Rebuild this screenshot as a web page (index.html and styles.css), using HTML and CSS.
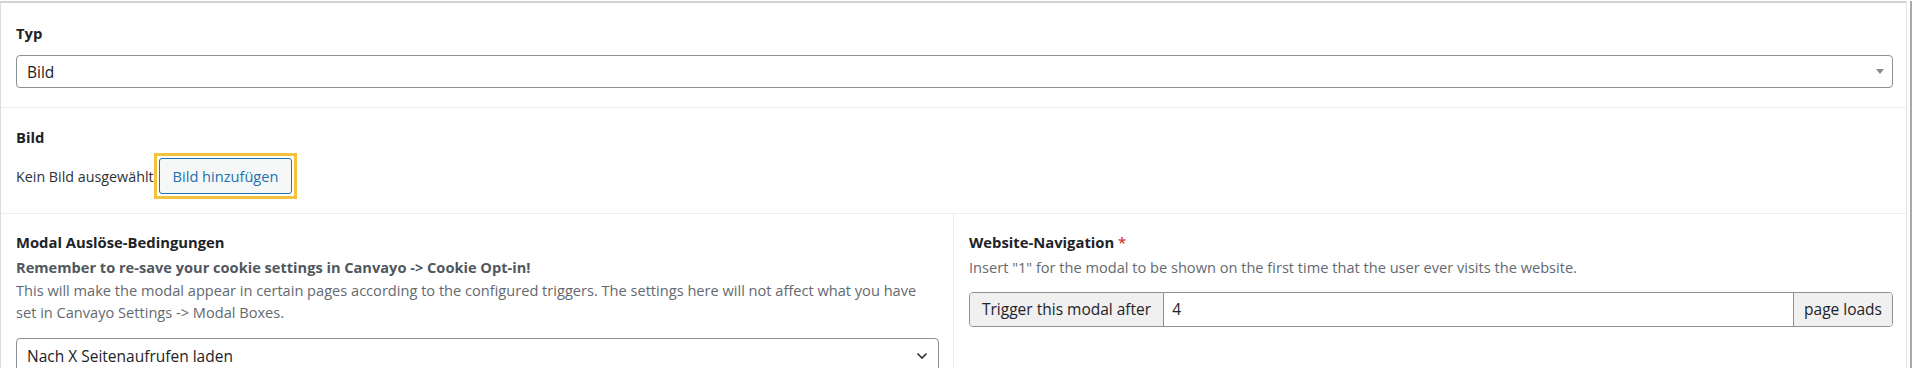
FILE: index.html
```html
<!DOCTYPE html>
<html lang="de">
<head>
    <meta charset="UTF-8">
    <title>Modal Felder</title>
    <link rel="stylesheet" href="styles.css">
</head>
<body>
    <div class="wrap">
        <div class="panel">
            <!-- Typ -->
            <div class="field field-type">
                <div class="field-label">Typ</div>
                <div class="select2-box">
                    <span>Bild</span>
                    <span class="select2-arrow"></span>
                </div>
            </div>

            <!-- Bild -->
            <div class="field field-image">
                <div class="field-label">Bild</div>
                <div class="image-row">
                    <span class="image-empty">Kein Bild ausgewählt</span>
                    <span class="highlight">
                        <button class="btn-add" type="button">Bild hinzufügen</button>
                    </span>
                </div>
            </div>

            <!-- Trigger settings -->
            <div class="field-row">
                <div class="field field-half field-left">
                    <div class="field-label">Modal Auslöse-Bedingungen</div>
                    <p class="field-desc"><b>Remember to re-save your cookie settings in Canvayo -&gt; Cookie Opt-in!</b><br>This will make the modal appear in certain pages according to the configured triggers. The settings here will not affect what you have set in Canvayo Settings -&gt; Modal Boxes.</p>
                    <div class="select-box">
                        <span>Nach X Seitenaufrufen laden</span>
                        <svg class="chevron" width="12" height="8" viewBox="0 0 12 8"><path d="M1.5 1.5 6 6l4.5-4.5" fill="none" stroke="#2c3338" stroke-width="1.6"/></svg>
                    </div>
                </div>
                <div class="field field-half">
                    <div class="field-label">Website-Navigation <span class="required">*</span></div>
                    <p class="field-desc">Insert "1" for the modal to be shown on the first time that the user ever visits the website.</p>
                    <div class="input-group">
                        <span class="addon addon-pre">Trigger this modal after</span>
                        <span class="input-value">4</span>
                        <span class="addon addon-post">page loads</span>
                    </div>
                </div>
            </div>
        </div>
    </div>
</body>
</html>
```

FILE: styles.css
```css
/* General */
body {
    margin: 0;
    font-family: 'Open Sans', 'Liberation Sans', sans-serif;
    font-size: 14.6px;
    color: #1d2327;
    background: #fff;
    height: 368px;
    overflow: hidden;
}

.wrap {
    border-right: 2px solid #a7aaad;
    margin-right: 1px;
    padding-right: 3px;
    height: 368px;
    box-sizing: border-box;
}

.panel {
    margin-top: 1px;
    border-top: 2px solid #d3d3d3;
    border-left: 1px solid #dcdcde;
    border-right: 1px solid #e2e2e2;
    height: 100%;
}

/* Fields */
.field {
    padding: 19px 13px 19px 15px;
    border-bottom: 1px solid #eeeeee;
}

.field-label {
    font-size: 14.8px;
    font-weight: 700;
    line-height: 22px;
    color: #1d2327;
}

.required {
    color: #d63638;
    font-weight: 600;
}

.field-desc {
    margin: 3px 0 0;
    line-height: 22.5px;
    color: #646970;
}

.field-desc b {
    color: #50575e;
    font-weight: 700;
}

/* Typ select */
.select2-box {
    margin-top: 11px;
    height: 33px;
    font-size: 15.5px;
    border: 1px solid #8c8f94;
    border-radius: 4px;
    box-sizing: border-box;
    display: flex;
    align-items: center;
    justify-content: space-between;
    padding: 0 8px 0 10px;
}

.select2-arrow {
    width: 0;
    height: 0;
    border-left: 4px solid transparent;
    border-right: 4px solid transparent;
    border-top: 5px solid #888;
}

/* Bild */
.field-image {
    padding-top: 18px;
    padding-bottom: 14px;
}

.image-row {
    margin-top: 5px;
    display: flex;
    align-items: center;
}

.image-empty {
    font-size: 14.3px;
    color: #2c3338;
}

.highlight {
    border: 3px solid #f5c33b;
    padding: 2px;
}

.btn-add {
    font-family: inherit;
    font-size: 14.6px;
    height: 36px;
    padding: 0 13px;
    color: #2271b1;
    background: #f6f7f7;
    border: 1px solid #2271b1;
    border-radius: 3px;
    display: block;
}

/* Two columns */
.field-row {
    display: flex;
}

.field-half {
    flex: 1;
    border-bottom: none;
    padding-top: 17px;
    padding-right: 14px;
}

.field-left {
    border-right: 1px solid #eeeeee;
}

.select-box {
    margin-top: 14px;
    height: 36px;
    font-size: 15.5px;
    border: 1px solid #8c8f94;
    border-radius: 4px;
    box-sizing: border-box;
    display: flex;
    align-items: center;
    justify-content: space-between;
    padding: 0 10px;
}

.input-group {
    margin-top: 13px;
    display: flex;
    height: 35px;
    font-size: 15.5px;
    border: 1px solid #8c8f94;
    border-radius: 4px;
    box-sizing: border-box;
    margin-right: -1px;
}

.addon {
    background: #f0f0f1;
    display: flex;
    align-items: center;
    padding: 0 10px;
}

.addon-pre {
    padding: 0 12px;
    border-right: 1px solid #8c8f94;
    border-radius: 3px 0 0 3px;
}

.addon-post {
    border-left: 1px solid #8c8f94;
    border-radius: 0 3px 3px 0;
}

.input-value {
    flex: 1;
    display: flex;
    align-items: center;
    padding: 0 8px;
}
```
